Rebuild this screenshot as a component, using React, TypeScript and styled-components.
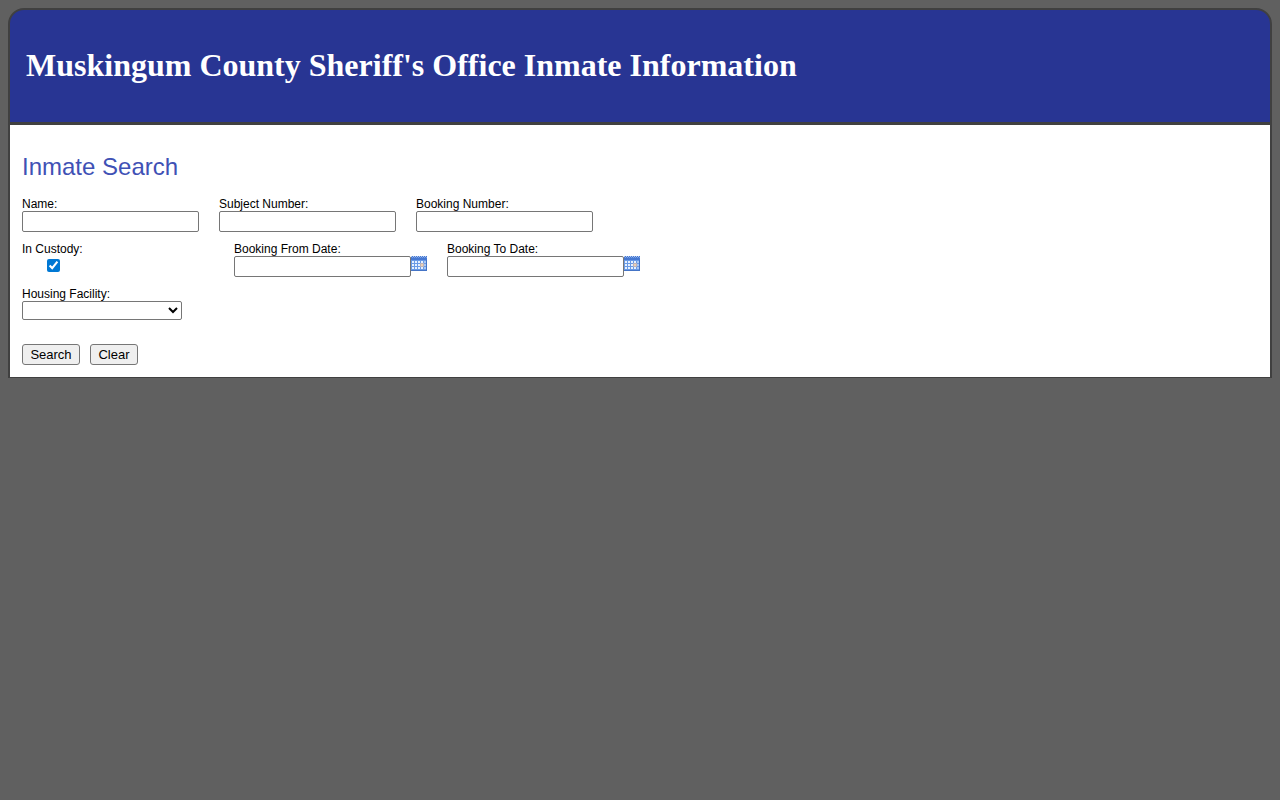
import React from "react";
import styled, { createGlobalStyle } from "styled-components";

const GlobalStyle = createGlobalStyle`
  body {
    margin: 8px;
    background: #606060;
    color: #000;
    font-family: "Liberation Sans", Arial, sans-serif;
    font-size: 12px;
  }
  * { box-sizing: border-box; }
`;

const Header = styled.header`
  padding: 37px 16px 39px;
  background: #283593;
  border: 2px solid #404040;
  border-bottom-width: 3px;
  border-radius: 16px 16px 0 0;
`;

const SiteTitle = styled.h1`
  margin: 0;
  color: #fff;
  font: bold 32px/36px "Liberation Serif", "Times New Roman", serif;
`;

const Main = styled.main`
  padding: 28px 12px 12px;
  background: #fff;
  border: solid #404040;
  border-width: 0 2px 1px;
`;

const PageTitle = styled.h2`
  margin: 0 0 16px;
  color: #3f51b5;
  font-size: 24px;
  line-height: 28px;
  font-weight: normal;
`;

const Row = styled.div`
  display: flex;
  flex-wrap: wrap;
  gap: 20px;
  margin-bottom: 10px;
`;

const Field = styled.div<{ $width?: number }>`
  display: flex;
  flex-direction: column;
  align-items: flex-start;
  width: ${(p) => (p.$width ? `${p.$width}px` : "auto")};
`;

const Label = styled.label`
  line-height: 14px;
`;

const TextBox = styled.input`
  width: 177px;
  height: 21px;
  margin: 0;
  padding: 1px 2px;
  background: #fff;
  border: 1px solid #767676;
  border-radius: 2px;
  font: 13px "Liberation Sans", Arial, sans-serif;
`;

const CheckBox = styled.input`
  width: 13px;
  height: 13px;
  margin: 3px 0 0 25px;
  accent-color: #0078d4;
`;

const Select = styled.select`
  width: 160px;
  height: 19px;
  margin: 0;
  background: #fff;
  border: 1px solid #767676;
  border-radius: 2px;
  font: 13px "Liberation Sans", Arial, sans-serif;
`;

const DateInput = styled.div`
  display: flex;
  align-items: flex-start;
`;

const CalendarButton = styled.button`
  display: block;
  width: 16px;
  height: 16px;
  padding: 0;
  border: 0;
  background: none;
  cursor: pointer;
`;

const Actions = styled.div`
  display: flex;
  gap: 10px;
  margin-top: 24px;
`;

const Button = styled.button<{ $width: number }>`
  width: ${(p) => p.$width}px;
  height: 21px;
  padding: 0;
  color: #000;
  background: #efefef;
  border: 1px solid #767676;
  border-radius: 3px;
  font: 13px "Liberation Sans", Arial, sans-serif;
`;

const columns = [1, 4, 7, 10, 13];
const rows = [5, 8, 11];

function CalendarIcon() {
  return (
    <svg width="16" height="16" viewBox="0 0 16 16" shapeRendering="crispEdges" aria-hidden="true">
      <rect width="16" height="15" fill="#6a9be6" />
      <rect width="16" height="4" fill="#4678d2" />
      {[0, 2, 4, 6, 8, 10, 12, 14].map((x) => (
        <React.Fragment key={x}>
          <rect x={x} width="1" height="1" fill="#b9cff2" />
          <rect x={x + 1} y="1" width="1" height="1" fill="#7ba2e4" />
        </React.Fragment>
      ))}
      {rows.map((y) =>
        columns.map((x) => (
          <rect key={`${x}-${y}`} x={x} y={y} width="2" height="2" fill={x === 13 ? "#a9c8f4" : "#e6f1ff"} />
        ))
      )}
      <rect x="9" y="7" width="4" height="4" fill="#b9b3bd" />
      <rect x="10" y="8" width="2" height="2" fill="#eed0b0" />
      <rect x="15" y="4" width="1" height="11" fill="#4474c6" />
      <rect y="14" width="16" height="1" fill="#4474c6" />
    </svg>
  );
}

function TextField({ id, label }: { id: string; label: string }) {
  return (
    <Field>
      <Label htmlFor={id}>{label}</Label>
      <TextBox id={id} type="text" />
    </Field>
  );
}

function DateField({ id, label, pick }: { id: string; label: string; pick: string }) {
  return (
    <Field>
      <Label htmlFor={id}>{label}</Label>
      <DateInput>
        <TextBox id={id} type="text" />
        <CalendarButton type="button" aria-label={pick}>
          <CalendarIcon />
        </CalendarButton>
      </DateInput>
    </Field>
  );
}

export default function App() {
  return (
    <>
      <GlobalStyle />
      <Header>
        <SiteTitle>Muskingum County Sheriff's Office Inmate Information</SiteTitle>
      </Header>
      <Main>
        <PageTitle>Inmate Search</PageTitle>
        <form onSubmit={(e) => e.preventDefault()}>
          <Row>
            <TextField id="name" label="Name:" />
            <TextField id="subject" label="Subject Number:" />
            <TextField id="booking" label="Booking Number:" />
          </Row>
          <Row>
            <Field $width={192}>
              <Label htmlFor="custody">In Custody:</Label>
              <CheckBox id="custody" type="checkbox" defaultChecked />
            </Field>
            <DateField id="from" label="Booking From Date:" pick="Pick from date" />
            <DateField id="to" label="Booking To Date:" pick="Pick to date" />
          </Row>
          <Field>
            <Label htmlFor="facility">Housing Facility:</Label>
            <Select id="facility" defaultValue="">
              <option value="" />
            </Select>
          </Field>
          <Actions>
            <Button type="submit" $width={58}>Search</Button>
            <Button type="reset" $width={48}>Clear</Button>
          </Actions>
        </form>
      </Main>
    </>
  );
}
